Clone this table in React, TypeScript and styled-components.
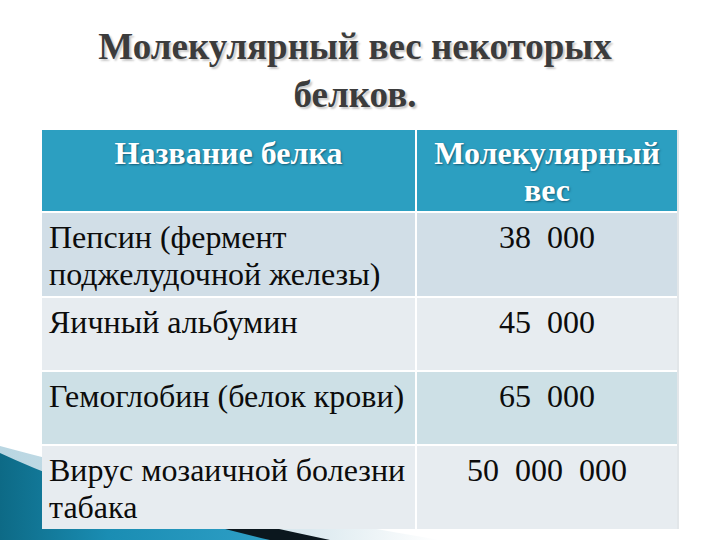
import React from "react";
import styled, { createGlobalStyle } from "styled-components";

const SERIF = `"Liberation Serif", "Times New Roman", serif`;

const Global = createGlobalStyle`
  html, body { margin: 0; padding: 0; background: #ffffff; font-family: ${SERIF}; }
  #root { width: 720px; height: 540px; }
`;

const Page = styled.div`
  position: relative;
  width: 720px;
  height: 540px;
  overflow: hidden;
  background: #ffffff;
  display: flex;
  flex-direction: column;
  align-items: flex-start;
  font-family: ${SERIF};
`;

const Decor = styled.svg`
  position: absolute;
  left: 0;
  bottom: 0;
  width: 720px;
  height: 120px;
  z-index: 0;
`;

const Title = styled.h1`
  position: relative;
  z-index: 1;
  align-self: center;
  width: 580px;
  margin: 0;
  padding: 23px 10px 0 0;
  font-family: ${SERIF};
  font-size: 37px;
  line-height: 48px;
  font-weight: 700;
  text-align: center;
  color: #3c3c3c;
  text-shadow: 2px 2px 2px rgba(0, 0, 0, 0.22);
`;

const Table = styled.div`
  position: relative;
  z-index: 1;
  margin: 11px 0 0 42px;
  display: grid;
  grid-template-columns: 373px 260px;
  grid-template-rows: 81px 83px 72px 72px 83px;
  gap: 2px;
  background: #ffffff;
  box-shadow: 2px 0 0 #e2e6e9;
`;

const HeadCell = styled.div`
  background: #2c9fc1;
  color: #ffffff;
  font-family: ${SERIF};
  font-weight: 700;
  font-size: 32px;
  line-height: 37px;
  text-align: center;
  padding: 5px 6px 0;
  text-shadow: 1px 1px 2px rgba(0, 40, 60, 0.55);
`;

const Cell = styled.div<{ $tone: "a" | "b" | "c"; $num?: boolean }>`
  background: ${(p) =>
    p.$tone === "a" ? "#d1dee7" : p.$tone === "c" ? "#cde0e6" : "#e7ecf0"};
  color: #0c0c0c;
  font-family: ${SERIF};
  font-size: 32px;
  line-height: 37px;
  text-align: ${(p) => (p.$num ? "center" : "left")};
  padding: ${(p) => (p.$num ? "6px 4px 0" : "6px 4px 0 7px")};
  white-space: ${(p) => (p.$num ? "pre" : "normal")};
`;

const rows: { name: string; weight: string; tone: "a" | "b" | "c" }[] = [
  { name: "Пепсин (фермент поджелудочной железы)", weight: "38  000", tone: "a" },
  { name: "Яичный альбумин", weight: "45  000", tone: "b" },
  { name: "Гемоглобин (белок крови)", weight: "65  000", tone: "c" },
  { name: "Вирус мозаичной болезни табака", weight: "50  000  000", tone: "b" },
];

export default function App() {
  return (
    <Page>
      <Global />
      <Decor viewBox="0 420 720 120" preserveAspectRatio="none">
        <defs>
          <linearGradient id="fade" x1="0" y1="0" x2="1" y2="0">
            <stop offset="0" stopColor="#b9d6e2" />
            <stop offset="0.7" stopColor="#dbe9ef" />
            <stop offset="1" stopColor="#ffffff" />
          </linearGradient>
          <linearGradient id="teal" x1="0" y1="0" x2="1" y2="0">
            <stop offset="0" stopColor="#0d6a86" />
            <stop offset="0.4" stopColor="#1a8db3" />
            <stop offset="1" stopColor="#2e9fc6" />
          </linearGradient>
        </defs>
        <path d="M0,446 Q200,500 440,540 L0,540 Z" fill="url(#fade)" />
        <path d="M0,462 Q150,502 330,540 L0,540 Z" fill="#0b171e" />
        <path d="M0,453 Q100,500 270,540 L0,540 Z" fill="url(#teal)" />
      </Decor>
      <Title>Молекулярный вес некоторых белков.</Title>
      <Table>
        <HeadCell>Название белка</HeadCell>
        <HeadCell>Молекулярный вес</HeadCell>
        {rows.map((r) => (
          <React.Fragment key={r.name}>
            <Cell $tone={r.tone}>{r.name}</Cell>
            <Cell $tone={r.tone} $num>
              {r.weight}
            </Cell>
          </React.Fragment>
        ))}
      </Table>
    </Page>
  );
}
